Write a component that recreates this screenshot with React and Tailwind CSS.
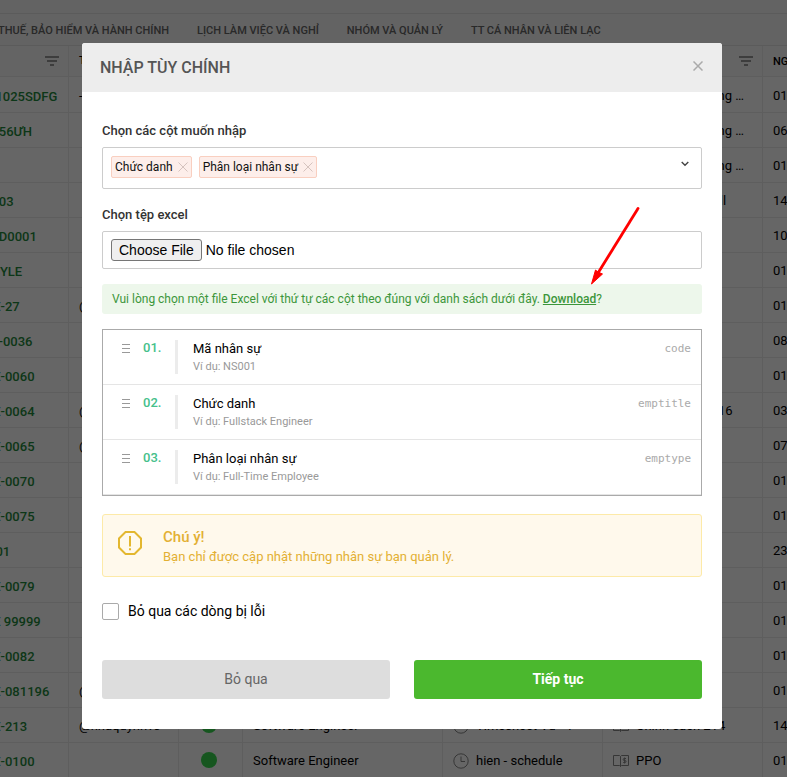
import { useState } from "react";
import clsx from "clsx";

const TABS = [
  "THUẾ, BẢO HIỂM VÀ HÀNH CHÍNH",
  "LỊCH LÀM VIỆC VÀ NGHỈ",
  "NHÓM VÀ QUẢN LÝ",
  "TT CÁ NHÂN VÀ LIÊN LẠC",
];

const EMPLOYEES = [
  { code: "W1025SDFG", account: "-", policy: "Chính sách công …", date: "01/03/2021" },
  { code: "1256ƯH", policy: "Chính sách công …", date: "06/03/2021" },
  { code: "", policy: "Chính sách công …", date: "01/02/2021" },
  { code: "1003", policy: "Chính sách skill", date: "14/12/2020" },
  { code: "11D0001", date: "10/12/2020" },
  { code: "STYLE", date: "01/12/2020" },
  { code: "NE-27", account: "@", date: "01/11/2020" },
  { code: "FE-0036", date: "08/10/2020" },
  { code: "NE-0060", date: "01/10/2020" },
  { code: "NE-0064", account: "@", policy: "Chính sách 2016", date: "03/09/2020" },
  { code: "NE-0065", account: "@", date: "07/09/2020" },
  { code: "NE-0070", date: "01/09/2020" },
  { code: "NE-0075", date: "01/08/2020" },
  { code: "W01", date: "23/07/2020" },
  { code: "NE-0079", date: "01/07/2020" },
  { code: "NE 99999", date: "01/06/2020" },
  { code: "NE-0082", date: "01/06/2020" },
  { code: "NE-081196", account: "@", date: "01/05/2020" },
  {
    code: "NE-213",
    account: "@nnaquynhvs",
    active: true,
    title: "Software Engineer",
    schedule: "Timesheet Vũ - 1",
    policy: "Chính sách 214",
    date: "14/04/2020",
  },
  {
    code: "NE-0100",
    active: true,
    title: "Software Engineer",
    schedule: "hien - schedule",
    policy: "PPO",
    date: "01/04/2020",
  },
];

const FIELDS = [
  { n: "01.", name: "Mã nhân sự", example: "Ví dụ: NS001", key: "code" },
  { n: "02.", name: "Chức danh", example: "Ví dụ: Fullstack Engineer", key: "emptitle" },
  { n: "03.", name: "Phân loại nhân sự", example: "Ví dụ: Full-Time Employee", key: "emptype" },
];

function FilterIcon() {
  return (
    <svg width="14" height="10" viewBox="0 0 14 10" fill="#999" aria-hidden="true">
      <rect width="14" height="2" />
      <rect x="2" y="4" width="10" height="2" />
      <rect x="5" y="8" width="4" height="2" />
    </svg>
  );
}

function ClockIcon() {
  return (
    <svg width="16" height="16" viewBox="0 0 16 16" fill="none" stroke="#888" aria-hidden="true" className="shrink-0">
      <circle cx="8" cy="8" r="7.2" />
      <path d="M8 3.5V8.5H12" />
    </svg>
  );
}

function PolicyIcon() {
  return (
    <svg width="16" height="14" viewBox="0 0 16 14" fill="none" stroke="#888" aria-hidden="true" className="shrink-0">
      <path d="M7.5 2.5L6.5 1.5H.5V11.5H6.5L7.5 12.5L8.5 11.5H15.5V1.5H8.5L7.5 2.5V12.5" />
      <path d="M13 4.5H11.2Q10.2 4.5 10.2 5.5T11.2 6.5H12Q13 6.5 13 7.5T12 8.5H10.2M11.6 3.5V9.5" />
    </svg>
  );
}

function CrossIcon({ size, strokeWidth = 1 }) {
  return (
    <svg
      width={size}
      height={size}
      viewBox="0 0 10 10"
      fill="none"
      stroke="currentColor"
      strokeWidth={strokeWidth}
      aria-hidden="true"
    >
      <path d="M.5.5L9.5 9.5M9.5.5L.5 9.5" />
    </svg>
  );
}

function EmployeePage() {
  const border = "border-b border-r border-[#eaeaea]";
  const head = clsx(border, "pr-[9px] pl-[10px] font-medium");
  const cell = clsx(border, "px-[10px] pt-[2px]");

  return (
    <div className="h-full overflow-hidden bg-white text-black">
      <nav className="bg-[#f7f7f7] pt-[13px]">
        <div className="flex h-[33px] items-center gap-7 border-y border-[#e4e4e4] pt-[3px] text-[11px] font-medium whitespace-nowrap">
          {TABS.map((tab) => (
            <a key={tab} href="#" className="text-[#666] first:-ml-[2px]">
              {tab}
            </a>
          ))}
        </div>
      </nav>
      <table className="-ml-[26px] w-[949px] table-fixed border-separate border-spacing-0 text-left text-[13px] whitespace-nowrap">
        <colgroup>
          <col className="w-[95px]" />
          <col className="w-[110px]" />
          <col className="w-16" />
          <col className="w-[200px]" />
          <col className="w-40" />
          <col className="w-40" />
          <col className="w-40" />
        </colgroup>
        <thead>
          <tr className="h-[31px] bg-[#fafafa] text-[11px]">
            <th className={head}>
              <div className="flex justify-end">
                <FilterIcon />
              </div>
            </th>
            <th className={head}>TÊN</th>
            <th className={head} />
            <th className={head} />
            <th className={head} />
            <th className={head}>
              <div className="flex justify-end">
                <FilterIcon />
              </div>
            </th>
            <th className={clsx(head, "pt-[2px]")}>NGÀY BẮT ĐẦU</th>
          </tr>
        </thead>
        <tbody>
          {EMPLOYEES.map((e, i) => (
            <tr key={i} className={i === 0 ? "h-9" : "h-[35px]"}>
              <td className={clsx(border, "px-[10px] pt-1 font-medium")}>
                <a href="#" className="text-[#1f8a3c]">
                  {e.code}
                </a>
              </td>
              <td className={cell}>{e.account}</td>
              <td className={border}>
                {e.active && <span className="ml-[22px] block h-4 w-4 rounded-full bg-[#37d84f]" />}
              </td>
              <td className={cell}>{e.title}</td>
              <td className={cell}>
                {e.schedule && (
                  <div className="flex items-center gap-[7px]">
                    <ClockIcon />
                    {e.schedule}
                  </div>
                )}
              </td>
              <td className={cell}>
                {e.policy && (
                  <div className="flex items-center gap-[7px]">
                    <PolicyIcon />
                    {e.policy}
                  </div>
                )}
              </td>
              <td className={cell}>{e.date}</td>
            </tr>
          ))}
        </tbody>
      </table>
    </div>
  );
}

function Tag({ label, onRemove }) {
  return (
    <span className="flex h-[22px] items-center gap-[5px] rounded-[2px] border border-[#f9cfc0] bg-[#fdeeea] px-[3px] text-xs text-[#111]">
      {label}
      <button type="button" aria-label={`Xóa ${label}`} onClick={onRemove} className="text-[#d5c3be]">
        <CrossIcon size={10} />
      </button>
    </span>
  );
}

function ImportDialog() {
  const [columns, setColumns] = useState(["Chức danh", "Phân loại nhân sự"]);
  const [skipErrors, setSkipErrors] = useState(false);

  return (
    <div
      role="dialog"
      aria-modal="true"
      aria-labelledby="import-title"
      className="relative w-full max-w-[640px] rounded-[3px] bg-white"
    >
      <header className="flex h-[49px] items-center justify-between rounded-t-[3px] bg-[#ededed] px-[18px]">
        <h2 id="import-title" className="text-base font-medium text-[#555]">
          NHẬP TÙY CHÍNH
        </h2>
        <button type="button" aria-label="Đóng" className="pr-px pb-1 text-[#aaa]">
          <CrossIcon size={10} strokeWidth={1.5} />
        </button>
      </header>

      <form className="px-5 pt-[29px] pb-[30px]" onSubmit={(e) => e.preventDefault()}>
        <label htmlFor="columns" className="block text-[13px] leading-5 font-medium text-[#333]">
          Chọn các cột muốn nhập
        </label>
        <div className="mt-[6px] flex h-[42px] items-start gap-[7px] rounded-[2px] border border-[#ccc] px-2 pt-2">
          {columns.map((c) => (
            <Tag key={c} label={c} onRemove={() => setColumns(columns.filter((x) => x !== c))} />
          ))}
          <input id="columns" className="h-[22px] min-w-0 flex-1 text-xs outline-none" />
          <button type="button" aria-label="Mở danh sách" className="mt-[5px] mr-1 text-[#444]">
            <svg width="8" height="6" viewBox="0 0 8 6" fill="none" stroke="currentColor" strokeWidth="1.4">
              <path d="M.7 1L4 4.3L7.3 1" />
            </svg>
          </button>
        </div>

        <label htmlFor="file" className="mt-4 block text-[13px] leading-5 font-medium text-[#333]">
          Chọn tệp excel
        </label>
        <input
          id="file"
          type="file"
          className="mt-[6px] block h-[38px] w-full rounded-[2px] border border-[#ccc] px-2 py-[7px] font-['Liberation_Sans',Arial,sans-serif] text-[14px] leading-5 text-black file:mr-1 file:h-[22px] file:rounded-[3px] file:border file:border-[#767676] file:bg-[#efefef] file:px-[7px]"
        />

        <p className="mt-[15px] rounded-[3px] bg-[#edf7eb] px-[10px] py-[5px] text-xs leading-5 text-[#3c963a]">
          Vui lòng chọn một file Excel với thứ tự các cột theo đúng với danh sách dưới đây.{" "}
          <a href="#" className="font-medium underline">
            Download
          </a>
          ?
        </p>

        <ol className="mt-[15px] border border-[#aaa]">
          {FIELDS.map((f) => (
            <li key={f.key} className="flex h-[55px] items-start border-b border-[#e5e5e5] pt-[10px] pr-[10px] pl-[19px]">
              <svg width="8" height="9" viewBox="0 0 8 9" fill="#999" aria-hidden="true" className="mt-1">
                <rect width="8" height="1" />
                <rect y="4" width="8" height="1" />
                <rect y="8" width="8" height="1" />
              </svg>
              <span className="ml-[13px] w-8 text-[13px] leading-4 font-medium text-[#45c08b]">{f.n}</span>
              <span className="h-[34px] w-[3px] bg-[#ececec]" />
              <div className="ml-[15px] flex-1">
                <p className="text-[13px] leading-[18px] text-black">{f.name}</p>
                <p className="text-[11px] leading-[18px] text-[#999]">{f.example}</p>
              </div>
              <code className="font-['DejaVu_Sans_Mono',monospace] text-[11px] leading-[18px] text-[#aaa]">{f.key}</code>
            </li>
          ))}
        </ol>

        {/* Warning */}
        <div className="mt-[18px] flex h-[63px] rounded-[3px] border border-[#fdeaa8] bg-[#fff9ec] pt-3 pl-[15px] text-[#e3b033]">
          <svg width="24" height="24" viewBox="0 0 24 24" fill="none" stroke="#e3b72f" strokeWidth="2" aria-hidden="true" className="mt-1">
            <path d="M7.5 1H16.5L23 7.5V16.5L16.5 23H7.5L1 16.5V7.5Z" />
            <path d="M12 5V15.5M12 17.2V19.2" />
          </svg>
          <div className="ml-[21px]">
            <p className="text-[15px] leading-5 font-medium">Chú ý!</p>
            <p className="text-[13px] leading-5">Bạn chỉ được cập nhật những nhân sự bạn quản lý.</p>
          </div>
        </div>

        <label className="mt-6 flex items-center gap-[9px] text-[14px] leading-5 text-black">
          <input
            type="checkbox"
            checked={skipErrors}
            onChange={(e) => setSkipErrors(e.target.checked)}
            className="h-[17px] w-[17px] appearance-none rounded-[2px] border border-[#aaa] checked:bg-[#4bb82e]"
          />
          Bỏ qua các dòng bị lỗi
        </label>

        <div className="mt-[39px] grid grid-cols-2 gap-6 text-[14px]">
          <button type="button" className="h-[39px] rounded-[3px] bg-[#ddd] text-[#666]">
            Bỏ qua
          </button>
          <button type="submit" className="h-[39px] rounded-[3px] bg-[#4bb82e] font-bold text-white">
            Tiếp tục
          </button>
        </div>
      </form>

      {/* Arrow pointing at the download link */}
      <svg
        width="50"
        height="80"
        viewBox="0 0 50 80"
        aria-hidden="true"
        className="pointer-events-none absolute top-[163px] right-[82px]"
      >
        <path d="M48 2.5L8 67" stroke="#f00" strokeWidth="2.8" strokeLinecap="round" />
        <path d="M1.5 78L5.5 64L8 66L12.5 68Z" fill="#f00" stroke="#f00" />
      </svg>
    </div>
  );
}

export default function App() {
  return (
    <div className="relative h-screen overflow-hidden font-[Roboto,sans-serif]">
      <EmployeePage />
      <div className="absolute inset-0 flex items-start justify-center bg-black/60 pt-[43px] pl-[17px]">
        <ImportDialog />
      </div>
    </div>
  );
}
